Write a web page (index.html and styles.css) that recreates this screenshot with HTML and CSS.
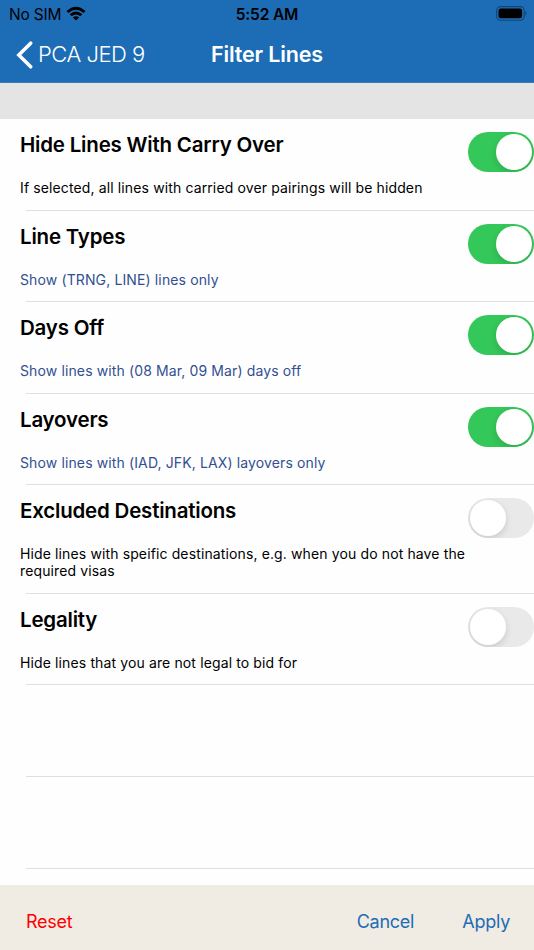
FILE: index.html
```html
<!DOCTYPE html>
<html lang="en"><head><meta charset="utf-8"><title>Filter Lines</title><link rel="stylesheet" href="styles.css"></head>
<body>
<header>
<div class="status"><div class="carrier"><span>No SIM</span><svg width="20" height="15" viewBox="0 0 20 15"><path d="M.5 5.1Q10-3.5 19.5 5.1L17.5 7.1Q10 .4 2.5 7.1ZM3.7 8.3Q10 2.8 16.3 8.3L14.3 10.3Q10 6.7 5.7 10.3ZM6.9 11.5Q10 8.9 13.1 11.5L10 14.6Z"/></svg></div><span class="time">5:52 AM</span><svg class="battery" width="32" height="15" viewBox="0 0 32 15"><rect x=".6" y=".6" width="27.6" height="13.6" rx="4" fill="none" stroke="#104474" stroke-width="1.1"/><rect x="2.5" y="2.5" width="23.6" height="9.8" rx="2.2"/><path d="M29.4 5Q31.7 7.4 29.4 9.8Z" fill="#104474"/></svg></div>
<nav><a class="back"><svg width="17" height="28" viewBox="0 0 17 28"><path d="M14.7 2.2 2.8 14 14.7 25.8" fill="none" stroke="#fff" stroke-width="3.5" stroke-linecap="round"/></svg><span>PCA JED 9</span></a><h1>Filter Lines</h1></nav>
</header>
<div class="spacer"></div>
<main>
<section class="row"><div class="copy"><h2>Hide Lines With Carry Over</h2><p>If selected, all lines with carried over pairings will be hidden</p></div><span class="switch on"></span></section>
<section class="row"><div class="copy"><h2>Line Types</h2><p class="value">Show (TRNG, LINE) lines only</p></div><span class="switch on"></span></section>
<section class="row"><div class="copy"><h2>Days Off</h2><p class="value">Show lines with (08 Mar, 09 Mar) days off</p></div><span class="switch on"></span></section>
<section class="row"><div class="copy"><h2>Layovers</h2><p class="value">Show lines with (IAD, JFK, LAX) layovers only</p></div><span class="switch on"></span></section>
<section class="row tall"><div class="copy"><h2>Excluded Destinations</h2><p>Hide lines with speific destinations, e.g. when you do not have the<br>required visas</p></div><span class="switch"></span></section>
<section class="row"><div class="copy"><h2>Legality</h2><p>Hide lines that you are not legal to bid for</p></div><span class="switch"></span></section>
<div class="row"></div><div class="row"></div>
</main>
<footer><a class="reset">Reset</a><a class="cancel">Cancel</a><a class="apply">Apply</a></footer>
</body></html>
```
FILE: styles.css
```css
*{box-sizing:border-box}
body{margin:0;width:534px;height:950px;display:flex;flex-direction:column;overflow:hidden;background:#fefefe;color:#000;font-family:Inter,sans-serif}
header{height:83px;background:#1c6db6;flex:none;border-bottom:1px solid #3a7cb8}
.status{height:27px;display:grid;grid-template-columns:1fr auto 1fr;align-items:center;padding:0 6px 0 9px;font-size:15.5px}
.carrier{display:flex;align-items:center;gap:5px;letter-spacing:-.2px}
.carrier span,.time{padding-top:1px}
.carrier svg{margin-top:-1px}
.time{font-weight:600;letter-spacing:-.15px;margin-right:3px}
.battery{justify-self:end}
nav{height:55px;display:grid;grid-template-columns:1fr auto 1fr;align-items:center;color:#fff;padding:0 16px}
.back{display:flex;align-items:center;gap:5px;font-size:22px;font-weight:300;letter-spacing:-.5px}
h1{margin:0;font-size:21.5px;font-weight:600;letter-spacing:-.15px}
.back span,h1{margin-top:-1px}
.spacer{height:36px;background:#e4e4e4;flex:none}
main{flex:1}
.row{height:91.6px;display:flex;justify-content:space-between;padding:12px 0 0 20px;background:linear-gradient(#dfdfe0,#dfdfe0) 26px 100%/100% 1px no-repeat}
.row:first-child{height:91.7px}
.tall{height:108.4px}
.copy{white-space:nowrap}
h2{margin:0;font-size:20.5px;line-height:28px;font-weight:600;letter-spacing:-.2px}
p{margin:20px 0 0;font-size:14px;line-height:17px;letter-spacing:.125px}
.value{color:#315092}
.switch{width:66px;height:40px;border-radius:20px;background:#e9e9e9;padding:2px;margin-top:1px;display:flex;flex:none;overflow:hidden}
.switch::after{content:"";width:36px;height:36px;border-radius:50%;background:#fff;box-shadow:0 3px 7px #0002}
.on{background:#34c759;justify-content:flex-end}
footer{height:65px;flex:none;background:#f0ebe3;display:flex;align-items:center;padding:8px 24px 0 26px;font-size:18px;letter-spacing:-.25px;color:#1c6db6}
.cancel{margin-left:auto;margin-right:48px}
.reset{color:#f00}
```
